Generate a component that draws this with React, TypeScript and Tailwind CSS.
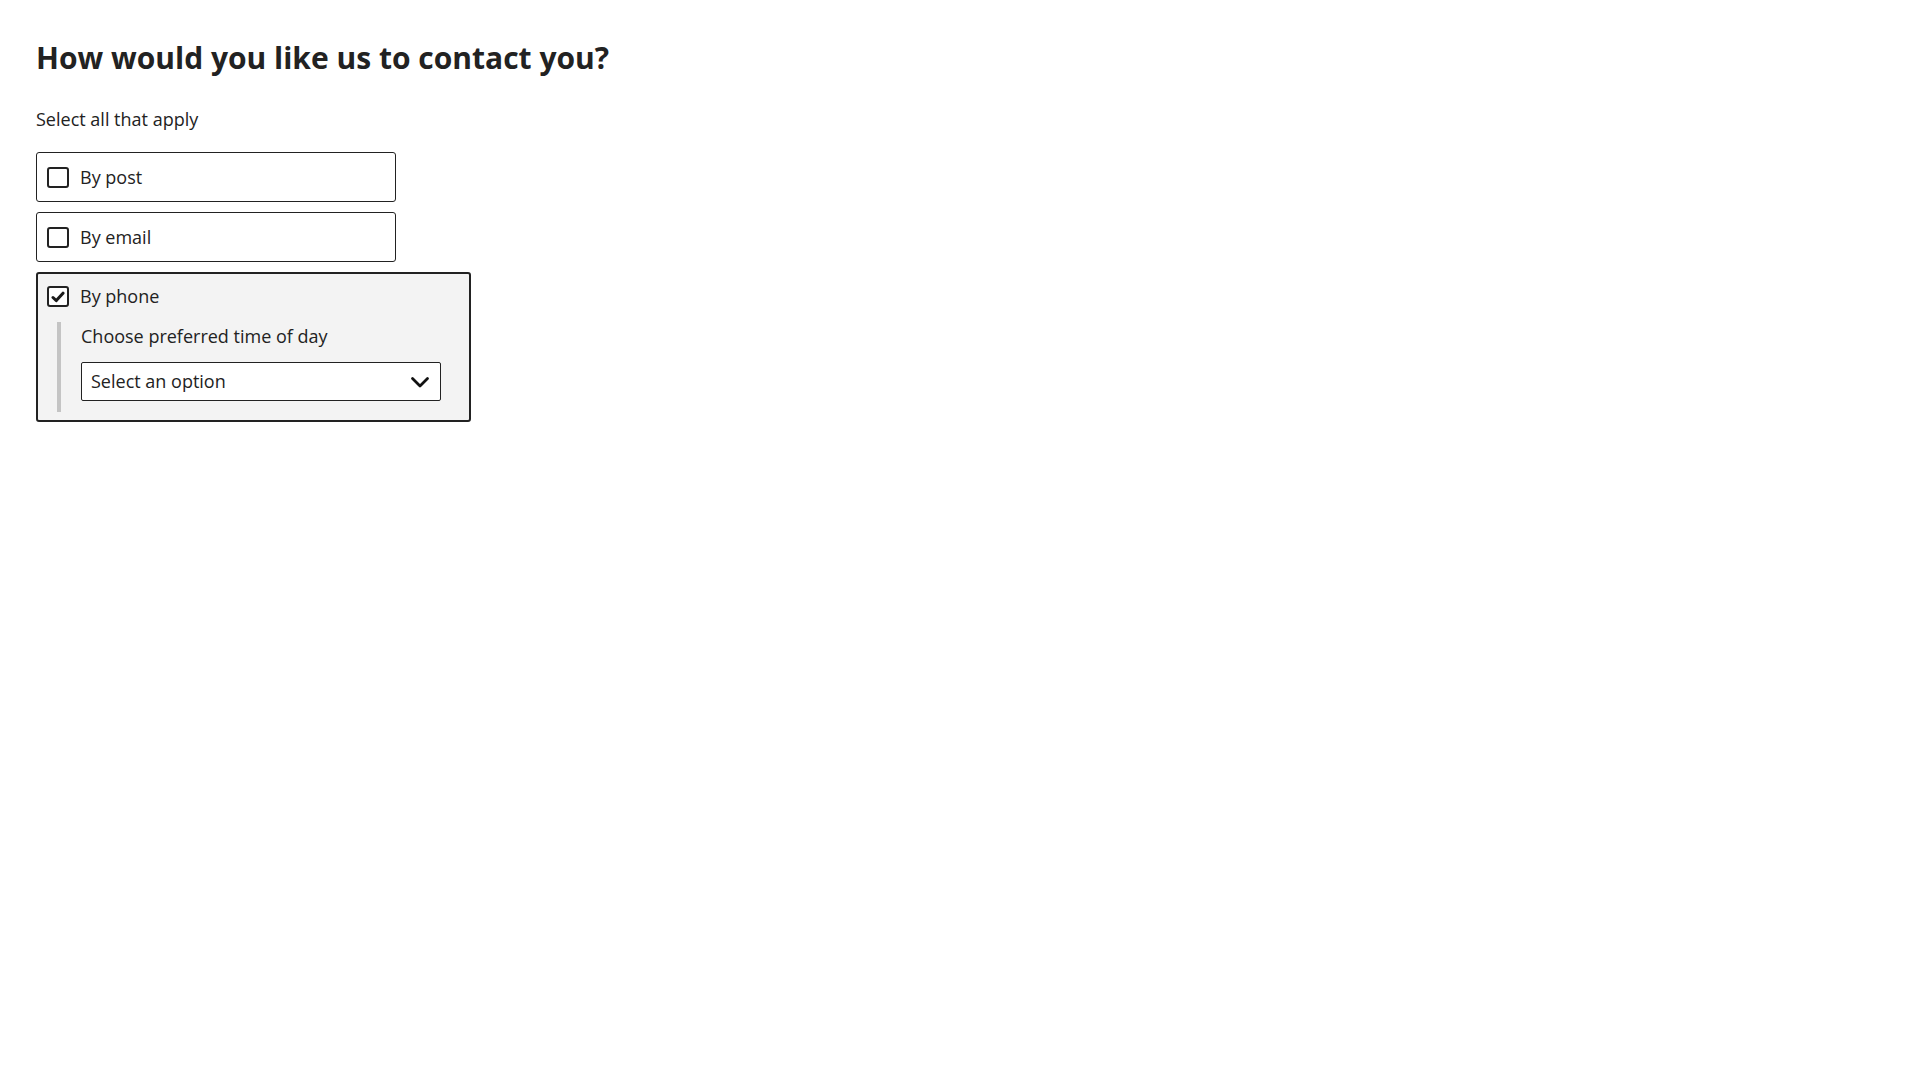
import React from "react";

function Box({ checked }: { checked?: boolean }) {
  return (
    <span className="flex h-[21px] w-[22px] shrink-0 items-center justify-center rounded-[3px] border-2 border-[#222] bg-white">
      {checked && (
        <svg width="14" height="12" viewBox="0 0 14 12" fill="none">
          <path d="M2 6.5 L5.3 9.6 L12 2.2" stroke="#1a1a1a" strokeWidth="3" strokeLinecap="round" strokeLinejoin="round" />
        </svg>
      )}
    </span>
  );
}

export default function App() {
  return (
    <div className="min-h-screen bg-white pl-[36px] pt-[38px] text-[#222]" style={{ fontFamily: '"Open Sans", "Noto Sans", sans-serif' }}>
      <h1 className="text-[30px] font-bold leading-[40px]">How would you like us to contact you?</h1>
      <p className="mt-[28px] text-[18px] leading-[26px]">Select all that apply</p>
      <div className="mt-[20px] flex flex-col gap-[10px]">
        <label className="flex h-[50px] w-[360px] items-center gap-[11px] rounded-[3px] border border-[#222] pl-[10px] text-[18px]">
          <Box />
          <span>By post</span>
        </label>
        <label className="flex h-[50px] w-[360px] items-center gap-[11px] rounded-[3px] border border-[#222] pl-[10px] text-[18px]">
          <Box />
          <span>By email</span>
        </label>
        <div className="w-[435px] rounded-[3px] border-2 border-[#222] bg-[#f3f3f3] pb-[8px] pl-[9px] pt-[9px]">
          <label className="flex items-center gap-[11px] text-[18px] leading-[27px]">
            <Box checked />
            <span>By phone</span>
          </label>
          <div className="ml-[10px] mt-[12px] border-l-4 border-[#c4c4c4] pb-[11px] pl-[20px] pt-[1px]">
            <div className="text-[18px] leading-[26px]">Choose preferred time of day</div>
            <div className="mt-[13px] flex h-[39px] w-[360px] items-center justify-between rounded-[2px] border border-[#222] bg-white pl-[9px] pr-[10px] text-[18px]">
              <span>Select an option</span>
              <svg width="20" height="12" viewBox="0 0 20 12" fill="none">
                <path d="M2.5 2.5 L10 10 L17.5 2.5" stroke="#111" strokeWidth="2.8" strokeLinecap="round" strokeLinejoin="round" />
              </svg>
            </div>
          </div>
        </div>
      </div>
    </div>
  );
}
